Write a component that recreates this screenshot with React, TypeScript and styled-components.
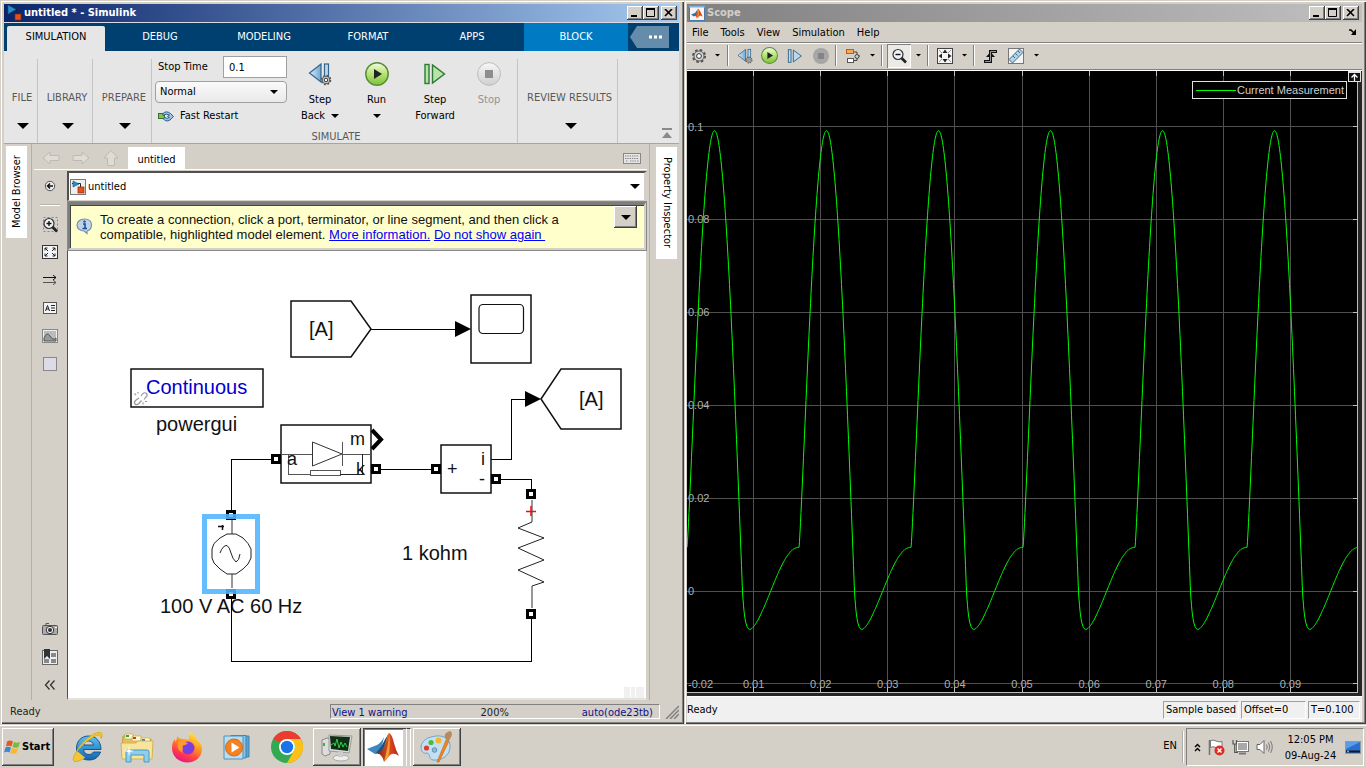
import React from "react";
import styled, { createGlobalStyle, css } from "styled-components";

const FACE = "#d4d0c8";
const UI_FONT = '"DejaVu Sans Condensed", "DejaVu Sans", sans-serif';
const SANS = '"Liberation Sans", Arial, sans-serif';

const GlobalStyle = createGlobalStyle`
  * { box-sizing: border-box; }
  html, body, #root { height: 100%; }
  body { margin: 0; background: ${FACE}; font: 11px/14px ${UI_FONT}; color: #000; overflow: hidden; }
  button, input, select { font: inherit; color: inherit; padding: 0; margin: 0; border: 0; background: none; border-radius: 0; }
  svg { display: block; flex: none; }
  a { color: #0000ff; }
`;

const raised = css`
  box-shadow: inset -1px -1px #404040, inset 1px 1px #fff, inset -2px -2px #808080;
  background: ${FACE};
`;

/* ---------- desktop and windows ---------- */

const Desktop = styled.div`
  display: flex;
  flex-direction: column;
  height: 100vh;
`;
const Windows = styled.main`
  flex: 1;
  min-height: 0;
  display: grid;
  grid-template-columns: 684fr 682fr;
`;
const Window = styled.section<{ $left: number; $right: number }>`
  display: flex;
  flex-direction: column;
  min-width: 0;
  min-height: 0;
  padding: 4px ${(p) => p.$right}px 2px ${(p) => p.$left}px;
  background: ${FACE};
  box-shadow: inset 1px 1px ${FACE}, inset 2px 2px #fff, inset -1px -1px #404040, inset -2px -2px #808080;
`;
const TitleBar = styled.header<{ $active?: boolean }>`
  display: flex;
  align-items: center;
  height: 18px;
  flex: none;
  padding: 0 3px 0 2px;
  color: ${(p) => (p.$active ? "#fff" : FACE)};
  background: ${(p) =>
    p.$active
      ? "linear-gradient(90deg, #0a246a, #a6caf0)"
      : "linear-gradient(90deg, #808080, #c0c0c0)"};
  ${(p) => p.$active && css`padding-right: 2px;`}
  h1 { flex: 1; margin: 0 0 0 2px; font-size: 11px; line-height: 14px; font-weight: bold; white-space: nowrap; }
`;
const CaptionButton = styled.button<{ $gap?: boolean }>`
  ${raised}
  width: 16px;
  height: 14px;
  display: grid;
  place-items: center;
  margin-left: ${(p) => (p.$gap ? 2 : 0)}px;
`;

function CaptionButtons() {
  return (
    <>
      <CaptionButton aria-label="Minimize">
        <svg width="10" height="8"><path d="M1 7h6" stroke="#000" strokeWidth="2" /></svg>
      </CaptionButton>
      <CaptionButton aria-label="Maximize">
        <svg width="10" height="10"><path d="M.5 1v7.500h8V1M0 1h9" stroke="#000" fill="none" /><path d="M0 1h9" stroke="#000" strokeWidth="2" /></svg>
      </CaptionButton>
      <CaptionButton aria-label="Close" $gap>
        <svg width="10" height="8"><path d="M1 0l7 7M8 0L1 7" stroke="#000" strokeWidth="1.600" /></svg>
      </CaptionButton>
    </>
  );
}

/* ---------- toolstrip ---------- */

const TabBar = styled.nav`
  display: flex;
  height: 29px;
  flex: none;
  border-top: 1px solid #d9dbe0;
  background: #004071;
  padding-left: 3px;
`;
const Tab = styled.button<{ $kind?: "current" | "context" }>`
  width: 104px;
  height: 28px;
  color: #fff;
  ${(p) =>
    p.$kind === "current" &&
    css`width: 98px; height: 25px; margin: 3px 3px 0 0; padding-bottom: 4px; background: #e6e6e6; color: #000; border-radius: 2px 2px 0 0;`}
  ${(p) => p.$kind === "context" && css`background: #007ac2;`}
  ${(p) => p.$kind !== "current" && css`padding-bottom: 1px;`}
`;
const MoreTabs = styled.button`
  width: 39px;
  height: 22px;
  margin: 3px 0 0 2px;
  padding-left: 10px;
  display: grid;
  place-items: center;
  background: #668cab;
  clip-path: polygon(18% 0, 100% 0, 100% 100%, 18% 100%, 0 50%);
`;
const Strip = styled.div`
  display: flex;
  height: 92px;
  flex: none;
  padding: 8px 0 0 3px;
  background: #e6e6e6;
`;
const StripRule = styled.div`
  height: 1px;
  flex: none;
  background: #a5a5a5;
`;
const CollapsedSection = styled.button<{ $w: number; $shift?: boolean }>`
  width: ${(p) => p.$w}px;
  padding: 32px 0 0 ${(p) => (p.$shift ? 4 : 0)}px;
  border-right: 1px solid #c4c4c4;
  color: #595959;
  display: flex;
  flex-direction: column;
  align-items: center;
  gap: 18px;
  white-space: nowrap;
  svg { margin-left: 2px; }
`;
const SimulateSection = styled.section`
  width: 366px;
  padding-left: 3px;
  border-right: 1px solid #c4c4c4;
  display: grid;
  grid-template: 70px 14px / 132px 1fr;
  h2 { grid-column: 1 / -1; margin: 1px 0 0; text-align: center; font-size: 11px; font-weight: normal; color: #595959; }
`;
const RunOptions = styled.div`
  display: flex;
  flex-direction: column;
  margin-top: -3px;
  gap: 3px;
`;
const StopTime = styled.label`
  display: flex;
  justify-content: space-between;
  align-items: center;
  padding-left: 3px;
  input { width: 64px; height: 22px; border: 1px solid #a0a0a0; background: #fff; padding: 0 5px; }
`;
const SelectWrap = styled.div`
  position: relative;
  select { appearance: none; width: 100%; height: 22px; padding: 0 4px; border: 1px solid #a0a0a0; border-radius: 4px; background: linear-gradient(#fafafa, #e9e9e9); }
  svg { position: absolute; right: 9px; top: 9px; pointer-events: none; }
`;
const FastRestart = styled.button`
  display: flex;
  align-items: center;
  gap: 6px;
  height: 20px;
  padding-left: 3px;
`;
const RunButtons = styled.div`
  display: flex;
  padding-left: 4px;
`;
const BigButton = styled.button<{ $w: number }>`
  width: ${(p) => p.$w}px;
  display: flex;
  flex-direction: column;
  align-items: center;
  line-height: 16px;
  &:disabled { color: #949494; }
  > svg { margin: 3px 0 6px; }
`;
const Inline = styled.span`
  display: flex;
  align-items: center;
  gap: 6px;
  height: 16px;
`;
const StripEnd = styled.button`
  margin: auto 6px 5px auto;
`;

const Caret = ({ w = 12, color = "#000" }: { w?: number; color?: string }) => (
  <svg width={w} height={w / 2} viewBox="0 0 12 6"><path d="M0 0h12L6 6z" fill={color} /></svg>
);

/* ---------- editor ---------- */

const Editor = styled.div`
  flex: 1;
  min-height: 0;
  display: grid;
  grid-template-columns: 28px 35px 1fr 30px;
`;
const SideStrip = styled.aside<{ $right?: boolean }>`
  border: solid #b3b0ab;
  border-width: ${(p) => (p.$right ? "0 0 0 1px" : "0 1px 0 0")};
  padding: ${(p) => (p.$right ? "3px 0 0 6px" : "2px 0 0 2px")};
`;
const SideTab = styled.button<{ $right?: boolean }>`
  writing-mode: vertical-rl;
  width: 21px;
  height: ${(p) => (p.$right ? 112 : 92)}px;
  background: #fff;
  ${(p) => !p.$right && css`transform: rotate(180deg);`}
  white-space: nowrap;
`;
const Palette = styled.div`
  display: flex;
  flex-direction: column;
  align-items: center;
  gap: 10px;
  padding: 33px 0 6px 1px;
  button { width: 20px; height: 18px; display: grid; place-items: center; }
  hr { width: 20px; height: 2px; margin: -1px 0; border: 0; border-bottom: 1px solid #fff; background: #b5b2ac; }
`;
const Spacer = styled.i`
  flex: 1;
`;
const Center = styled.div`
  display: flex;
  flex-direction: column;
  min-width: 0;
  margin-right: 2px;
`;
const DocRow = styled.div`
  display: flex;
  align-items: center;
  height: 26px;
  flex: none;
  margin-left: -33px;
  padding: 3px 6px 0 8px;
  border-bottom: 1px solid #fff;
`;
const NavButton = styled.button`
  width: 30px;
  height: 16px;
`;
const DocTab = styled.button`
  align-self: stretch;
  width: 57px;
  margin: 0 auto 0 -4px;
  padding-top: 4px;
  background: #fff;
`;
const PathBar = styled.div`
  display: flex;
  align-items: center;
  height: 30px;
  flex: none;
  margin-top: 1px;
  padding: 0 6px 0 1px;
  gap: 2px;
  background: #fff;
  border: solid;
  border-width: 2px 3px 1px 2px;
  border-color: #505050 ${FACE} ${FACE} #505050;
  span { flex: 1; }
  svg:last-child { margin-right: -2px; }
`;
const Notice = styled.div`
  display: flex;
  height: 50px;
  flex: none;
  padding: 7px 7px 0 6px;
  background: #ffffcc;
  border: solid #7d7d7d;
  border-width: 4px 3px 3px 3px;
  border-right-color: ${FACE};
  border-bottom-color: ${FACE};
  box-shadow: inset 1px 1px #444;
  outline: 1px solid #8a8a8a;
  outline-offset: -1px;
  font: 13px/15px ${SANS};
  color: #111;
  p { flex: 1; margin: 0 0 0 7px; }
  > svg { margin-top: 6px; }
`;
const NoticeMenu = styled.button`
  ${raised}
  width: 23px;
  height: 22px;
  margin-top: -6px;
  display: grid;
  place-items: center;
`;
const Canvas = styled.div`
  flex: 1;
  min-height: 0;
  background: #fff;
  border: solid;
  border-width: 0 1px 2px 1px;
  border-color: ${FACE} ${FACE} #e4e2dc #505050;
  overflow: hidden;
  svg { width: 100%; height: 100%; }
`;
const Status = styled.footer`
  display: flex;
  align-items: center;
  height: 22px;
  flex: none;
  padding: 2px 0 0 6px;
  color: #222;
`;
const StatusInfo = styled.div`
  display: flex;
  justify-content: space-between;
  width: 330px;
  height: 15px;
  margin: -1px 5px 0 auto;
  padding: 0 6px 0 1px;
  border: solid;
  border-width: 1px;
  border-color: #808080 #fff #fff #808080;
  line-height: 16px;
  a { color: #10108a; text-decoration: none; }
`;

/* ---------- scope ---------- */

const Menu = styled.nav`
  display: flex;
  align-items: center;
  height: 20px;
  flex: none;
  padding: 1px 4px 0 5px;
  gap: 12px;
  svg { margin-left: auto; }
`;
const ScopeTools = styled.div`
  display: flex;
  align-items: center;
  height: 29px;
  flex: none;
  border-top: 1px solid #808080;
  border-bottom: 1px solid #fff;
  box-shadow: inset 0 1px #fff, inset 0 -1px #808080;
  padding: 0 0 2px 1px;
`;
const Tool = styled.button<{ $w: number; $pressed?: boolean }>`
  width: ${(p) => p.$w}px;
  height: 24px;
  display: grid;
  place-items: center;
  ${(p) => p.$pressed && css`background: #eceae6; box-shadow: inset 1px 1px #808080, inset -1px -1px #fff;`}
`;
const ToolGap = styled.i`
  width: 2px;
  height: 21px;
  margin: 0 4px 0 2px;
  background: #808080;
  border-right: 1px solid #fff;
`;
const PlotFrame = styled.div`
  flex: 1;
  min-height: 0;
  position: relative;
  padding: 0 4px 3px 0;
  background: #262626;
  svg.plot { width: 100%; height: 100%; background: #000; }
`;
const Legend = styled.div`
  position: absolute;
  top: 10px;
  right: 15px;
  width: 155px;
  height: 18px;
  display: flex;
  align-items: center;
  gap: 1px;
  padding-left: 3px;
  border: 1px solid #e0e0e0;
  background: #000;
  color: #cfcfcf;
  font: 11px/14px ${SANS};
  white-space: nowrap;
`;
const PlotMenu = styled.button`
  position: absolute;
  top: 0;
  right: 1px;
`;
const ScopeStatus = styled.footer`
  display: flex;
  align-items: center;
  gap: 2px;
  height: 26px;
  flex: none;
  border-top: 1px solid #fff;
  background: #f0f0f0;
  padding-right: 2px;
  > span:first-child { flex: 1; }
`;
const StatusCell = styled.span<{ $w: number }>`
  width: ${(p) => p.$w}px;
  height: 18px;
  padding: 1px 0 0 2px;
  border: solid;
  border-width: 1px;
  border-color: #a0a0a0 #fff #fff #a0a0a0;
  white-space: nowrap;
`;

/* ---------- taskbar ---------- */

const Taskbar = styled.footer`
  display: flex;
  align-items: center;
  height: 44px;
  flex: none;
  padding: 2px 2px 0;
  background: ${FACE};
  box-shadow: inset 0 1px ${FACE}, inset 0 2px #fff;
`;
const Start = styled.button`
  ${raised}
  width: 52px;
  height: 38px;
  display: flex;
  align-items: center;
  gap: 1px;
  padding-left: 2px;
  font-weight: bold;
`;
const Launch = styled.button`
  width: 50px;
  height: 38px;
  display: grid;
  place-items: center;
`;
const Launchers = styled.div`
  display: flex;
  margin: 0 1px 0 8px;
`;
const Running = styled.button<{ $active?: boolean }>`
  ${raised}
  width: 48px;
  height: 38px;
  margin-right: 2px;
  display: grid;
  place-items: center;
  ${(p) =>
    p.$active &&
    css`
      width: 40px;
      margin: 0;
      background: #fff;
      box-shadow: inset 1px 1px #404040, inset 2px 2px #808080, inset -1px -1px #fff;
    `}
`;
const Stack = styled.i`
  width: 4px;
  height: 38px;
  border: solid #fff;
  border-width: 0 1px 0 0;
  border-top: 1px solid #404040;
  &:last-of-type { margin-right: 2px; }
`;
const Lang = styled.span`
  margin-left: auto;
  padding: 8px 5px 0 0;
  height: 32px;
  border-right: 2px groove #fff;
`;
const Tray = styled.div`
  display: flex;
  align-items: center;
  width: 178px;
  height: 38px;
  margin-left: 2px;
  padding: 0 2px 0 6px;
  border: solid;
  border-width: 1px;
  border-color: #808080 #fff #fff #808080;
  > button { width: 24px; display: grid; place-items: center; }
  > button:first-child { width: 8px; margin-right: 3px; }
  time { margin: 0 auto; padding-top: 2px; text-align: center; line-height: 16px; white-space: nowrap; }
`;

/* ---------- icons ---------- */

const ModelIcon = ({ framed }: { framed?: boolean }) => (
  <svg width="16" height="16" viewBox="0 0 16 16">
    {framed && <rect x=".5" y=".5" width="15" height="15" fill="#eee" stroke="#777" />}
    <path d={framed ? "M2 4.500H10.500V9" : "M0 5H11.500V9"} stroke="#222" fill="none" />
    <path d={framed ? "M3 2v6l6-3z" : "M2 0v9l8-4.500z"} fill="#2a8fc8" stroke="#10587f" strokeWidth=".6" />
    <rect x={framed ? 8 : 9} y={framed ? 8 : 9} width="6" height="6" fill="#e5501c" stroke="#8a2a08" strokeWidth=".7" />
  </svg>
);

const MatlabLogo = () => (
  <svg width="32" height="32" viewBox="0 0 32 32">
    <defs>
      <linearGradient id="mlr" x1="0" x2="1"><stop offset="0" stopColor="#7c1d10" /><stop offset=".45" stopColor="#f0862a" /><stop offset=".6" stopColor="#d9431e" /><stop offset="1" stopColor="#b52614" /></linearGradient>
    </defs>
    <path d="M0 18L10 14Q14 12 17 6L14 19L8 23Z" fill="#3e86bd" />
    <path d="M8 23L14 16Q18 8 22 2Q20 14 15 20L12 23Q10 22 8 23Z" fill="#1f4f80" />
    <path d="M22 2Q25 3 27 12Q29 20 32 25Q27 21 23 24Q20 28 17 31Q16 25 11 22Q16 20 18 13Q20 5 22 2Z" fill="url(#mlr)" />
    <path d="M22 3Q22 16 17 30Q15 24 11 22Q17 19 19 11Z" fill="#a8281a" opacity=".55" />
    <path d="M22 3Q24 14 21 26Q18 29 17 30Q21 18 22 3Z" fill="#f9a63a" opacity=".8" />
  </svg>
);

const Gear = ({ x = 8, y = 8, r = 5 }: { x?: number; y?: number; r?: number }) => (
  <g>
    <circle cx={x} cy={y} r={r} fill="none" stroke="#555" strokeWidth={r * 0.34} strokeDasharray={`${r * 0.42} ${r * 0.365}`} />
    <circle cx={x} cy={y} r={r * 0.84} fill="#d6d6d6" stroke="#4c4c4c" strokeWidth=".9" />
    <circle cx={x} cy={y} r={r * 0.4} fill="#fff" stroke="#333" strokeWidth="1" />
  </g>
);

const StepBackIcon = ({ size }: { size: number }) => (
  <svg width={size} height={size} viewBox="0 0 24 24">
    <defs><linearGradient id="sb" x1="0" x2="1"><stop offset="0" stopColor="#dceefa" /><stop offset="1" stopColor="#6fa6cf" /></linearGradient></defs>
    <path d="M13 2V20L1.500 11Z" fill="url(#sb)" stroke="#33658c" strokeWidth="1.200" />
    <rect x="16.500" y="2" width="4" height="18" fill="#b9d8ee" stroke="#33658c" strokeWidth="1.200" />
    <Gear x={18} y={18} r={4.5} />
  </svg>
);
const StepForwardIcon = ({ size, blue }: { size: number; blue?: boolean }) => {
  const s = blue ? "#33658c" : "#2c7a35";
  const f = blue ? "#b9d8ee" : "#b9e3a8";
  return (
    <svg width={size} height={size} viewBox="0 0 24 24">
      <rect x="2" y="2.500" width="4" height="19" fill={f} stroke={s} strokeWidth="1.400" />
      <path d="M9.500 3V21L21.500 12Z" fill={f} stroke={s} strokeWidth="1.400" />
    </svg>
  );
};
const RunIcon = ({ size }: { size: number }) => (
  <svg width={size} height={size} viewBox="0 0 24 24">
    <defs><linearGradient id="rg" x1="0" y1="0" x2="0" y2="1"><stop offset="0" stopColor="#f2fbe0" /><stop offset=".5" stopColor="#b5e276" /><stop offset="1" stopColor="#7cc136" /></linearGradient></defs>
    <circle cx="12" cy="12" r="11.200" fill="url(#rg)" stroke="#5a8f34" strokeWidth="1.500" />
    <path d="M9 7V17L17 12Z" fill="#222" />
  </svg>
);
const StopIcon = () => (
  <svg width="24" height="24" viewBox="0 0 24 24">
    <defs><linearGradient id="sg" x1="0" y1="0" x2="0" y2="1"><stop offset="0" stopColor="#f7f7f7" /><stop offset="1" stopColor="#cfcfcf" /></linearGradient></defs>
    <circle cx="12" cy="12" r="11.400" fill="url(#sg)" stroke="#bdbdbd" />
    <rect x="8" y="8" width="8" height="8" fill="#8d8d8d" />
  </svg>
);
const FastRestartIcon = () => (
  <svg width="16" height="13" viewBox="0 0 16 13">
    <rect x=".5" y="3.500" width="6" height="5" fill="#7ec850" stroke="#356d2a" />
    <path d="M4.500 4Q8 0 12.500 3.500L15.500 6.500L12 10Q8 12.500 5 8.500L7 7.500Q9 9.500 11.500 7.500L9.500 6.500L11.500 5Q8 3 5 5.500Z" fill="#9cc4e2" stroke="#2d5f8a" />
  </svg>
);
const ArrowIcon = ({ turn }: { turn: number }) => (
  <svg width="18" height="14" viewBox="0 0 18 14">
    <path transform={`rotate(${turn} 9 7)`} d="M1 7L8 1V4.500H17V9.500H8V13Z" fill="#dfdcd6" stroke="#bdbab3" />
  </svg>
);
const UpIcon = () => (
  <svg width="18" height="16" viewBox="0 0 18 16">
    <path d="M9 .5L16 8H12.500V15.500H5.500V8H2Z" fill="#dfdcd6" stroke="#bdbab3" />
  </svg>
);
const Magnifier = ({ minus }: { minus?: boolean }) => (
  <svg width="17" height="17" viewBox="0 0 17 17">
    {!minus && <rect x="1.500" y="1.500" width="14" height="14" fill="none" stroke="#888" strokeDasharray="2 2" />}
    <path d="M10 10.500L15 15.500" stroke="#222" strokeWidth="2.600" />
    <circle cx="7" cy="7.500" r="5" fill="#eef3f7" stroke="#333" strokeWidth="1.200" />
    <path d={minus ? "M4.500 7.500h5" : "M4.500 7.500h5M7 5v5"} stroke="#111" strokeWidth="1.400" />
  </svg>
);

/* ---------- block diagram ---------- */

const Port = ({ x, y }: { x: number; y: number }) => (
  <g>
    <rect x={x - 5} y={y - 5} width="10" height="10" fill="#000" />
    <rect x={x - 2} y={y - 2} width="4" height="4" fill="#fff" />
  </g>
);

function Diagram() {
  return (
    <svg fontFamily={SANS} fontSize="20" fill="#111">
      <path d="M556 436h6v12h-6zM563 436h4v12h-4zM568 436h8v12h-8z" fill="#f0f0f0" />
      <g transform="translate(-68 -251)">
        <g fill="none" stroke="#000" shapeRendering="crispEdges">
          <path d="M371 329.500H456M491 459.500H511.500V399.500H526M231.500 511V459.500H272M381 469.500H431M501 479.500H531.500V490M531.500 619V661.500H231.500V599" />
        </g>
        <g fill="#fff" stroke="#111" strokeWidth="1.500">
          <path d="M291 301H351L371 329L351 357H291Z" />
          <path d="M541 399L561 369H621V429H561Z" />
          <path d="M471 295H531V363H471Z" />
          <rect x="479" y="304.500" width="44.500" height="29" rx="4" strokeWidth="1.200" />
          <path d="M131 369H263V407H131Z" />
          <path d="M281 425H371V483H281Z" />
          <path d="M441 445H491V493H441Z" />
        </g>
        <path d="M455 321L471 329L455 337ZM525 391L541 399L525 407Z" fill="#000" />

        <text x="309" y="336">[A]</text>
        <text x="579" y="406">[A]</text>
        <text x="146" y="394" fill="#0000cd">Continuous</text>
        <text x="156" y="431">powergui</text>
        <text x="402" y="560">1 kohm</text>

        <g fill="none" stroke="#999" strokeWidth="1.200" transform="translate(133 391)">
          <path d="M8 5L10 2.500Q12 1 13.500 2.500T13 6L11 8.500M6 7L2.500 9.500Q.5 11.500 2 13T6 12.500L8.500 9.500M3 4L1.500 2.500M5 2.500V1M10 11.500V13.500M12 10.500H14" />
        </g>

        <g fill="none" stroke="#555" strokeWidth="1" shapeRendering="crispEdges">
          <path d="M281 454.500H312M342 454.500H371M288.500 454V474.500H310M342.500 442V466" />
          <path d="M310.500 470.500H340.500V475.500H310.500Z" fill="#fff" />
          <path d="M340 474.500H362.500V454" stroke="#222" />
        </g>
        <path d="M312.500 442V466L342 454Z" fill="none" stroke="#333" />
        <g fontSize="18">
          <text x="287" y="465">a</text>
          <text x="350" y="445">m</text>
          <text x="356" y="475">k</text>
          <text x="447" y="475">+</text>
          <text x="481" y="465">i</text>
          <text x="479" y="485">-</text>
        </g>
        <path d="M372 430L381 439.500L372 449" fill="none" stroke="#000" strokeWidth="4" />

        <Port x={276} y={459} />
        <Port x={376} y={469} />
        <Port x={436} y={469} />
        <Port x={496} y={479} />
        <Port x={531} y={494} />
        <Port x={531} y={614} />
        <Port x={231} y={515} />
        <Port x={231} y={594} />

        <g fill="none">
          <rect x="204.500" y="516.500" width="53" height="75" stroke="#4db4ff" strokeOpacity=".88" strokeWidth="5" />
          <path d="M232 520V534M232 574V588M532 500V522M532 586V608" stroke="#777" strokeWidth="1.500" />
          <path d="M227 534H236L243 538L248 543.500L251 549V558L248 564L243 569L236 574H227L220 569L214 563L212 558V549L214 543.500L220 538Z" stroke="#222" />
          <path d="M220 553Q223 545 227 545.500Q229.500 547 231 553T236 562Q239 561 240 554" stroke="#222" />
          <path d="M218 526.500H224M222.500 525V530" stroke="#111" strokeWidth="1.500" />
          <path d="M532 522L518 528L544 538L518 548L544 560L518 570L544 582L532 586" stroke="#222" />
          <path d="M526 511.500H536M531 506V516" stroke="#e81010" strokeWidth="1.500" />
        </g>
        <text x="160" y="613">100 V AC 60 Hz</text>
        <path d="M231.500 599V630" stroke="#000" shapeRendering="crispEdges" />
      </g>
    </svg>
  );
}

/* ---------- scope trace ---------- */

const PLOT_W = 671;
const PLOT_H = 622;
const PERIOD = 112;
const SNUB = 0.0095;
const toY = (amps: number) => 520.5 - amps * 4645;

function current(x: number) {
  const u = (x + 0.5) % PERIOD;
  const w = (2 * Math.PI * u) / PERIOD;
  if (u < 1) return SNUB;
  if (u < PERIOD / 2) return 0.0992 * Math.sin(w) + SNUB * 0.55 * Math.exp(-(u - 1) / 3);
  return SNUB * Math.cos(w) + SNUB * Math.exp(-(u - PERIOD / 2) / 2.6);
}

const trace = Array.from({ length: 1342 }, (_, i) => `${i / 2},${toY(current(i / 2)).toFixed(1)}`).join(" ");
const xTicks = [1, 2, 3, 4, 5, 6, 7, 8, 9];
const yTicks = [0.1, 0.08, 0.06, 0.04, 0.02, 0, -0.02];
const yPct = (v: number) => `${((toY(v) - 0.5) / PLOT_H) * 100}%`;
const xPct = (n: number) => `${((n * 67.1 - 0.5) / PLOT_W) * 100}%`;

function Plot() {
  return (
    <svg className="plot" fontFamily={SANS} fontSize="11" fill="#afafaf">
      <g stroke="#505050" shapeRendering="crispEdges">
        {xTicks.map((n) => <line key={n} x1={xPct(n)} x2={xPct(n)} y1="0" y2="100%" />)}
        {yTicks.map((v) => <line key={v} x1="0" x2="100%" y1={yPct(v)} y2={yPct(v)} />)}
      </g>
      <g stroke="#bdbdbd" shapeRendering="crispEdges">
        {xTicks.map((n) => (
          <React.Fragment key={n}>
            <line x1={xPct(n)} x2={xPct(n)} y1="0" y2="5" />
            <line x1={xPct(n)} x2={xPct(n)} y1="99.100%" y2="100%" />
          </React.Fragment>
        ))}
        {yTicks.map((v) => <line key={v} x1="99.200%" x2="100%" y1={yPct(v)} y2={yPct(v)} />)}
        <line x1="99.920%" x2="99.920%" y1="0" y2="100%" />
        <line x1="0" x2="100%" y1="99.920%" y2="99.920%" />
      </g>
      {yTicks.map((v) => <text key={v} x="1" y={yPct(v)} dy="4">{v}</text>)}
      {xTicks.map((n) => <text key={n} x={xPct(n)} y="98.500%" dy="4" textAnchor="middle">{(n / 100).toFixed(2)}</text>)}
      <svg width="100%" height="100%" viewBox={`0 0 ${PLOT_W} ${PLOT_H}`} preserveAspectRatio="none">
        <polyline points={trace} fill="none" stroke="#00ff00" vectorEffect="non-scaling-stroke" />
      </svg>
    </svg>
  );
}

/* ---------- page ---------- */

function SimulinkWindow() {
  return (
    <Window $left={4} $right={5} aria-label="Simulink">
      <TitleBar $active>
        <ModelIcon />
        <h1>untitled * - Simulink</h1>
        <CaptionButtons />
      </TitleBar>
      <TabBar>
        <Tab $kind="current">SIMULATION</Tab>
        <Tab>DEBUG</Tab>
        <Tab>MODELING</Tab>
        <Tab>FORMAT</Tab>
        <Tab>APPS</Tab>
        <Tab $kind="context">BLOCK</Tab>
        <MoreTabs aria-label="More tabs">
          <svg width="14" height="4"><path d="M1 .5h3v3H1zM6 .5h3v3H6zM11 .5h3v3h-3z" fill="#fff" /></svg>
        </MoreTabs>
      </TabBar>
      <Strip>
        <CollapsedSection $w={31}>FILE<Caret /></CollapsedSection>
        <CollapsedSection $w={55} $shift>LIBRARY<Caret /></CollapsedSection>
        <CollapsedSection $w={59} $shift>PREPARE<Caret /></CollapsedSection>
        <SimulateSection>
          <RunOptions>
            <StopTime>Stop Time<input defaultValue="0.1" /></StopTime>
            <SelectWrap>
              <select aria-label="Simulation mode"><option>Normal</option></select>
              <Caret w={8} />
            </SelectWrap>
            <FastRestart><FastRestartIcon />Fast Restart</FastRestart>
          </RunOptions>
          <RunButtons>
            <BigButton $w={58}><StepBackIcon size={24} />Step<Inline>Back <Caret w={8} /></Inline></BigButton>
            <BigButton $w={55}><RunIcon size={24} />Run<Inline><Caret w={8} /></Inline></BigButton>
            <BigButton $w={62}><StepForwardIcon size={24} />Step<span>Forward</span></BigButton>
            <BigButton $w={46} disabled><StopIcon />Stop</BigButton>
          </RunButtons>
          <h2>SIMULATE</h2>
        </SimulateSection>
        <CollapsedSection $w={100} $shift>REVIEW RESULTS<Caret /></CollapsedSection>
        <StripEnd aria-label="Collapse toolstrip">
          <svg width="12" height="10"><path d="M1 1h10" stroke="#8a8a8a" strokeWidth="2" /><path d="M1 10h10L6 4z" fill="#8a8a8a" /></svg>
        </StripEnd>
      </Strip>
      <StripRule />
      <Editor>
        <SideStrip><SideTab>Model Browser</SideTab></SideStrip>
        <Palette>
          <button aria-label="Hide browser">
            <svg width="12" height="12"><circle cx="6" cy="6" r="4.700" fill="#eee" stroke="#555" /><path d="M9 6H4M6 3.500L3.500 6L6 8.500" stroke="#111" strokeWidth="1.500" fill="none" /></svg>
          </button>
          <hr />
          <button aria-label="Zoom"><Magnifier /></button>
          <button aria-label="Fit to view">
            <svg width="16" height="14"><rect x=".5" y=".5" width="15" height="13" fill="#f4f4f4" stroke="#333" /><path d="M3 5.500V3H5.500M3 3L6 6M10.500 3H13V5.500M13 3L10 6M3 8.500V11H5.500M3 11L6 8M13 8.500V11H10.500M13 11L10 8" stroke="#222" fill="none" /></svg>
          </button>
          <button aria-label="Sample time">
            <svg width="15" height="10"><path d="M0 2.500H13M10 0L13 2.500L10 5" stroke="#111" fill="none" /><path d="M0 7.500H13M10 5L13 7.500L10 10" stroke="#555" fill="none" /></svg>
          </button>
          <button aria-label="Annotation">
            <svg width="14" height="12"><rect x=".5" y=".5" width="13" height="11" fill="#f4f4f4" stroke="#555" /><path d="M2.500 9L4.500 3.500L6.500 9M3 7H6M8 3.500H12M8 6H12M8 8.500H12" stroke="#222" fill="none" /></svg>
          </button>
          <button aria-label="Image">
            <svg width="16" height="14"><rect x=".5" y=".5" width="15" height="13" fill="#eee" stroke="#888" /><rect x="2" y="2" width="12" height="10" fill="#bbb" /><path d="M2 9Q5 2 8 7T14 9V12H2Z" fill="#999" stroke="#555" /></svg>
          </button>
          <button aria-label="Area">
            <svg width="14" height="14"><rect x=".5" y=".5" width="13" height="13" fill="#dcdce8" stroke="#888" /></svg>
          </button>
          <Spacer />
          <button aria-label="Screenshot">
            <svg width="16" height="12"><rect x=".5" y="2.500" width="15" height="9" rx="1" fill="#aaa" stroke="#555" /><path d="M4 2.500V.5H7" stroke="#555" fill="none" /><circle cx="8" cy="7" r="3.700" fill="#eee" stroke="#333" /><circle cx="8" cy="7" r="2" fill="#333" /><path d="M13 4.500h2" stroke="#fff" /></svg>
          </button>
          <button aria-label="Viewmarks">
            <svg width="16" height="16"><rect x=".5" y="1.500" width="15" height="14" fill="#eee" stroke="#666" /><path d="M9 4h5v4H9zM9 10h5v4H9zM2 10h5v4H2z" fill="#888" /><path d="M2 0H8V10L5 7L2 10Z" fill="#333" /></svg>
          </button>
          <button aria-label="Collapse palette">
            <svg width="12" height="10"><path d="M5.500 .5L1.500 5L5.500 9.500M10.500 .5L6.500 5L10.500 9.500" stroke="#333" strokeWidth="1.300" fill="none" /></svg>
          </button>
        </Palette>
        <Center>
          <DocRow>
            <NavButton aria-label="Back"><ArrowIcon turn={0} /></NavButton>
            <NavButton aria-label="Forward"><ArrowIcon turn={180} /></NavButton>
            <NavButton aria-label="Up"><UpIcon /></NavButton>
            <DocTab>untitled</DocTab>
            <svg width="18" height="11"><rect x=".5" y=".5" width="17" height="10" fill="#e6e6e6" stroke="#888" /><path d="M2 3h14M2 5.500h14M3 8h2M7 8h6M14 8h2" stroke="#888" strokeDasharray="1.500 .8" /></svg>
          </DocRow>
          <PathBar><ModelIcon framed /><span>untitled</span><Caret w={10} /></PathBar>
          <Notice>
            <svg width="17" height="17" viewBox="0 0 17 17">
              <path d="M8.500 1C13 1 15.500 3.500 15.500 7S13 12.500 11 13L11 15.500L8 13C4 13 1 10.500 1 7S4 1 8.500 1Z" fill="#bcd3ea" stroke="#7c8fa5" strokeWidth="1.200" />
              <path d="M7 6H9V10.500M6.500 10.500H11" stroke="#1b4f93" strokeWidth="1.600" fill="none" /><circle cx="8.500" cy="3.600" r="1.200" fill="#1b4f93" />
            </svg>
            <p>
              To create a connection, click a port, terminator, or line segment, and then click a<br />
              compatible, highlighted model element. <a href="#more">More information.</a> <a href="#hide">Do not show again&nbsp;</a>
            </p>
            <NoticeMenu aria-label="Message options"><Caret w={10} /></NoticeMenu>
          </Notice>
          <Canvas><Diagram /></Canvas>
        </Center>
        <SideStrip $right><SideTab $right>Property Inspector</SideTab></SideStrip>
      </Editor>
      <Status>
        Ready
        <StatusInfo><a href="#warning">View 1 warning</a><span>200%</span><a href="#solver">auto(ode23tb)</a></StatusInfo>
        <svg width="14" height="14"><path d="M1 14L14 1M5 14L14 5M9 14L14 9" stroke="#808080" strokeWidth="1.500" /></svg>
      </Status>
    </Window>
  );
}

function ScopeWindow() {
  return (
    <Window $left={3} $right={4} aria-label="Scope">
      <TitleBar>
        <svg width="16" height="16" viewBox="0 0 16 16"><rect x=".5" y=".5" width="15" height="15" fill="#f5f5f5" stroke="#4a7ba8" /><path d="M0 1.500h16" stroke="#7fb0dc" strokeWidth="2" /><path d="M2 9.500L6 8L9 4L7 10.500L5 11.500Z" fill="#2d6da8" /><path d="M9 3.500Q11 5 13.500 11.500L11 10.500L8 13.500Q7.500 11 5.500 10.500Q8 9 9 3.500Z" fill="#d9481e" /><path d="M9 4Q10 8 8.500 13" stroke="#f9a63a" fill="none" /></svg>
        <h1>Scope</h1>
        <CaptionButtons />
      </TitleBar>
      <Menu>
        <button>File</button><button>Tools</button><button>View</button><button>Simulation</button><button>Help</button>
        <svg width="9" height="7"><path d="M0 1H2L5 4" stroke="#000" strokeWidth="1.500" fill="none" /><path d="M7 0V6H2Z" fill="#000" /></svg>
      </Menu>
      <ScopeTools>
        <Tool $w={22} aria-label="Configuration"><svg width="16" height="16"><Gear r={6} /></svg></Tool>
        <Tool $w={15} aria-label="Configuration options"><Caret w={5} /></Tool>
        <ToolGap />
        <Tool $w={24} aria-label="Step back"><StepBackIcon size={16} /></Tool>
        <Tool $w={25} aria-label="Run"><RunIcon size={17} /></Tool>
        <Tool $w={26} aria-label="Step forward"><StepForwardIcon size={16} blue /></Tool>
        <Tool $w={25} aria-label="Stop" disabled><svg width="16" height="16"><circle cx="8" cy="8" r="8" fill="#a6a6a6" /><rect x="5" y="5" width="6" height="6" fill="#858585" /></svg></Tool>
        <ToolGap />
        <Tool $w={24} aria-label="Highlight block">
          <svg width="16" height="16"><path d="M8 4H12V8H15M8 12.500H12V8" stroke="#444" fill="none" /><rect x="1.500" y="1.500" width="7" height="4" fill="#f8a855" stroke="#c75a10" /><rect x="2.500" y="10.500" width="6" height="4" fill="#fff" stroke="#555" /><circle cx="12" cy="8.500" r="2" fill="#ccc" stroke="#444" /></svg>
        </Tool>
        <Tool $w={14} aria-label="Highlight options"><Caret w={5} /></Tool>
        <ToolGap />
        <Tool $w={24} $pressed aria-label="Zoom out"><Magnifier minus /></Tool>
        <Tool $w={14} aria-label="Zoom options"><Caret w={5} /></Tool>
        <ToolGap />
        <Tool $w={24} aria-label="Scale axes">
          <svg width="16" height="16"><rect x=".5" y=".5" width="15" height="15" fill="#f4f4f4" stroke="#444" /><path d="M8 1.500L10.500 5H5.500ZM8 14.500L10.500 11H5.500ZM1.500 8L5 5.500V10.500ZM14.500 8L11 5.500V10.500Z" fill="#222" /><path d="M2 2l3 3M14 2l-3 3M2 14l3-3M14 14l-3-3" stroke="#999" /></svg>
        </Tool>
        <Tool $w={14} aria-label="Scale options"><Caret w={5} /></Tool>
        <ToolGap />
        <Tool $w={24} aria-label="Triggers">
          <svg width="16" height="16"><path d="M1 13.500H7.500V3.500H14" stroke="#111" strokeWidth="3" fill="none" /><path d="M3 9L7.500 4L12 9Z" fill="#111" /><path d="M2 13.500H7.500V3.500H13" stroke="#999" fill="none" /></svg>
        </Tool>
        <Tool $w={26} aria-label="Measurements">
          <svg width="16" height="16"><rect x=".5" y=".5" width="15" height="15" fill="#f4f4f4" stroke="#777" /><path d="M1 11.500L11.500 1L15 4.500L4.500 15Z" fill="#b3d3e8" stroke="#3b6a8c" /><path d="M5 8l2 2M7.500 5.500l2 2M10 3l2 2" stroke="#3b6a8c" /></svg>
        </Tool>
        <Tool $w={14} aria-label="Measurement options"><Caret w={5} /></Tool>
      </ScopeTools>
      <PlotFrame>
        <Plot />
        <Legend>
          <svg width="40" height="1"><rect width="40" height="1" fill="#00ff00" /></svg>
          Current Measurement
        </Legend>
        <PlotMenu aria-label="Maximize axes">
          <svg width="13" height="11"><rect width="13" height="11" fill="#e4e4e4" /><path d="M1 2h11v8H1z" fill="#111" /><path d="M6.500 10V4M3.500 6.500L6.500 3.500L9.500 6.500" stroke="#fff" fill="none" strokeWidth="1.300" /></svg>
        </PlotMenu>
      </PlotFrame>
      <ScopeStatus>
        <span>Ready</span>
        <StatusCell $w={76}>Sample based</StatusCell>
        <StatusCell $w={65}>Offset=0</StatusCell>
        <StatusCell $w={52}>T=0.100</StatusCell>
      </ScopeStatus>
    </Window>
  );
}

function TaskbarRow() {
  return (
    <Taskbar>
      <Start>
        <svg width="17" height="15" viewBox="0 0 17 15">
          <path d="M3 1.500Q6-.5 9 1.500L7.500 6.500Q5 5 2 6.500Z" fill="#e8572a" />
          <path d="M10 2Q13 3.500 16 2L14.500 7Q12 8.500 8.500 7Z" fill="#7db93c" />
          <path d="M1.500 7.500Q4 6 7 7.500L5.500 12.500Q3 11 0 12.500Z" fill="#3f86d0" />
          <path d="M8 8Q11 9.500 14 8L12.500 13Q10 14.500 6.500 13Z" fill="#f7b82a" />
        </svg>
        Start
      </Start>
      <Launchers>
        <Launch aria-label="Internet Explorer">
          <svg width="32" height="32" viewBox="0 0 32 32">
            <defs><linearGradient id="ie" x1="0" y1="0" x2="0" y2="1"><stop offset="0" stopColor="#55c3f5" /><stop offset="1" stopColor="#1565ae" /></linearGradient></defs>
            <path d="M17.500 5C25 5 30 10.500 30 18.500H12.500C13 22 15 23.500 18 23.500C20 23.500 21.500 22.500 22.500 21H29.500C27.500 26.500 23.500 29 18 29C10 29 5.500 24 5.500 17S10.500 5 17.500 5ZM12.700 14H22.500C22 11.500 20 10 17.600 10S13.500 11.500 12.700 14Z" fill="url(#ie)" stroke="#0d4a85" strokeWidth=".9" />
            <path d="M6 20C1 27 1 31.500 6 30.500C9 29.500 12 28 14 26.500M6 20C11 10 22 2 28 1.500C32 1.500 31.500 4 30 7.500C30 4 28 3.500 25.500 4.500C18 7.500 10 15 6 20" fill="#f3c63a" stroke="#e0a91f" />
          </svg>
        </Launch>
        <Launch aria-label="Windows Explorer">
          <svg width="34" height="32" viewBox="0 0 34 32">
            <path d="M3 5H12L14 8H31V26H2Z" fill="#e6c15a" stroke="#c09a3c" />
            <path d="M5 3h8v5H5zM12 5h9v5h-9zM21 7h9v5h-9z" fill="#fff8d8" stroke="#c9a94e" strokeWidth=".7" />
            <path d="M6 4h3v2H6z" fill="#35a53b" /><path d="M13 6h3v2h-3z" fill="#d3382d" /><path d="M22 8h3v2h-3z" fill="#2f7fd0" />
            <path d="M1 12H16L18 10H33L32 28H2Z" fill="#f8e59d" stroke="#d3b253" />
            <path d="M6 31V21Q6 19 8 19H27Q29 19 29 21V31H24V24H11V31Z" fill="#8fcdea" stroke="#4a99c4" />
            <path d="M9 14l.7 5 4.300 1-4.300 1-.7 5-.7-5-4.300-1 4.300-1z" fill="#fff" />
          </svg>
        </Launch>
        <Launch aria-label="Firefox">
          <svg width="32" height="32" viewBox="0 0 32 32">
            <defs>
              <linearGradient id="fx" x1=".8" y1="0" x2=".3" y2="1"><stop offset="0" stopColor="#fff04a" /><stop offset=".4" stopColor="#ff9a1f" /><stop offset=".75" stopColor="#ff3b4a" /><stop offset="1" stopColor="#e3128c" /></linearGradient>
              <radialGradient id="fp"><stop offset="0" stopColor="#5b4cf0" /><stop offset="1" stopColor="#9a2fd0" /></radialGradient>
            </defs>
            <path d="M20 1C24 4 25 6 26 9Q31 12 31 18C31 26 24.500 31.500 16.500 31.500S1 26 1 17Q1 11 4 8V11L6 7.500V5Q8 8 12 8Q16 8 18 9Q17 5 20 1Z" fill="url(#fx)" />
            <circle cx="17" cy="17" r="6.500" fill="url(#fp)" />
            <path d="M7 11Q12 9 17 12.500Q14 14.500 12 14.500Q11 16 12 18Q10.500 20 12 22Q5 19 7 11Z" fill="#ff9a2a" />
            <path d="M22 10Q26 12 26.500 18Q25 12 22 10Z" fill="#ffd43a" />
          </svg>
        </Launch>
        <Launch aria-label="Media Player">
          <svg width="30" height="28" viewBox="0 0 30 28">
            <path d="M12 3H27V24H12Z" fill="#5aa5d0" stroke="#3f83ae" /><path d="M9 2.500H24V25H9Z" fill="#8cc4e3" stroke="#3f83ae" />
            <path d="M2 3H21V26H2Z" fill="#b9dcf0" stroke="#4d92bd" />
            <circle cx="12" cy="14.500" r="8.500" fill="#f58220" stroke="#d96a10" /><path d="M9.500 9.500V19.500L17.500 14.500Z" fill="#fff" />
          </svg>
        </Launch>
        <Launch aria-label="Chrome">
          <svg width="32" height="32" viewBox="0 0 32 32">
            <circle cx="16" cy="16" r="16" fill="#34a853" />
            <path d="M16 0A16 16 0 0 1 29.900 8H16A8 8 0 0 0 9.100 12L2.150 8A16 16 0 0 1 16 0Z" fill="#ea3d2f" />
            <path d="M29.900 8A16 16 0 0 1 16 32L22.900 20A8 8 0 0 0 22.900 12L16 8Z" fill="#fbc116" />
            <path d="M2.150 8L9.100 20A8 8 0 0 0 16 24L9.100 12Z" fill="#34a853" />
            <circle cx="16" cy="16" r="8" fill="#fff" /><circle cx="16" cy="16" r="6.200" fill="#1a73e8" />
          </svg>
        </Launch>
      </Launchers>
      <Running aria-label="Resource monitor">
        <svg width="32" height="30" viewBox="0 0 32 30">
          <path d="M1 8L6 6L9 7V22L4 24L1 22Z" fill="#ddd" stroke="#888" /><path d="M2 11h2v3H2z" fill="#3b3" />
          <path d="M8 3L31 4L28 21L8 19Z" fill="#dcdcdc" stroke="#999" /><path d="M9 4L29 5L27 19L10 17Z" fill="#0f3014" />
          <path d="M10 13L13 11L14 14L16 7L18 16L20 10L22 15L24 11L26 15" stroke="#2fd044" fill="none" />
          <ellipse cx="20" cy="26" rx="8" ry="3" fill="#eee" stroke="#aaa" /><path d="M17 20h5v5h-5z" fill="#ccc" />
        </svg>
      </Running>
      <Running $active aria-label="MATLAB"><MatlabLogo /></Running>
      <Stack /><Stack />
      <Running aria-label="Paint">
        <svg width="34" height="32" viewBox="0 0 34 32">
          <path d="M16 5C25 4 31 9 30 17C29 25 21 30 13 29C8 28 11 23 7 22C3 23 1 20 1 16C2 9 8 6 16 5Z" fill="#c3e0f2" stroke="#6ea4c6" />
          <circle cx="6.500" cy="17" r="2.600" fill="#e23b2e" /><circle cx="11" cy="11.500" r="2.600" fill="#4cb848" /><circle cx="18.500" cy="9.500" r="3" fill="#f6b52a" /><circle cx="14.500" cy="19" r="2.300" fill="#8dbbd8" stroke="#5b90b3" />
          <path d="M26 9L29 10L19 31L17 31Z" fill="#ee8722" stroke="#c4640e" strokeWidth=".6" /><path d="M25 7Q23 2 30 0Q34 2 30 8L28 11Z" fill="#b98a5c" />
        </svg>
      </Running>
      <Lang>EN</Lang>
      <Tray>
        <button aria-label="Show hidden icons"><svg width="7" height="9"><path d="M1 4L3.500 1.500L6 4M1 8L3.500 5.500L6 8" stroke="#000" strokeWidth="1.400" fill="none" /></svg></button>
        <button aria-label="Action Center"><svg width="17" height="17"><path d="M1.500 1V16" stroke="#777" strokeWidth="1.600" /><path d="M2.500 1.500Q5 .5 8 2T14 2.500V8.500Q11 10 8 8.500T2.500 8.500Z" fill="#fff" stroke="#777" /><circle cx="11.500" cy="11.500" r="5" fill="#dd2c23" /><path d="M9.500 9.500l4 4M13.500 9.500l-4 4" stroke="#fff" strokeWidth="1.500" /></svg></button>
        <button aria-label="Network"><svg width="17" height="16"><rect x="4.500" y="2.500" width="12" height="10" fill="#fff" stroke="#777" /><rect x="6" y="4" width="9" height="7" fill="#a8a8a8" /><path d="M1 1V5H4.500V1M2.700 5V13.500H6" stroke="#555" fill="none" strokeWidth="1.200" /><path d="M7 14.500H14" stroke="#777" strokeWidth="2" /></svg></button>
        <button aria-label="Volume"><svg width="17" height="16"><path d="M1 5.500H4L8 1.500V14.500L4 10.500H1Z" fill="#fff" stroke="#666" /><path d="M10.500 5.500Q12 8 10.500 10.500M12.500 3.500Q15 8 12.500 12.500M14.500 2Q18 8 14.500 14" stroke="#777" fill="none" /></svg></button>
        <time>12:05 PM<br />09-Aug-24</time>
        <svg width="16" height="13"><rect x=".5" y=".5" width="15" height="12" fill="#2a6fd0" stroke="#8a9bb0" /><path d="M1 1H15L1 8Z" fill="#6fb0f0" opacity=".7" /><path d="M1 10.500H15" stroke="#1a1a1a" strokeWidth="2" /><path d="M2 10.500h2" stroke="#6c6" strokeWidth="1.500" /></svg>
      </Tray>
    </Taskbar>
  );
}

export default function App() {
  return (
    <>
      <GlobalStyle />
      <Desktop>
        <Windows>
          <SimulinkWindow />
          <ScopeWindow />
        </Windows>
        <TaskbarRow />
      </Desktop>
    </>
  );
}
